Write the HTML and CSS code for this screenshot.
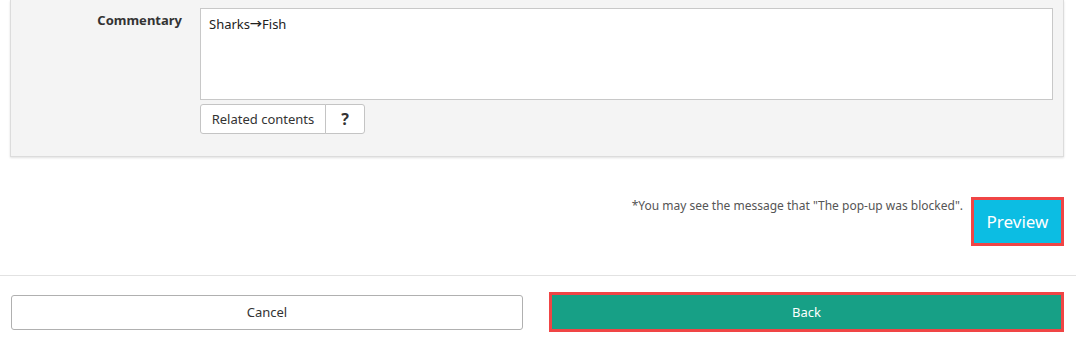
FILE: index.html
```html
<!DOCTYPE html>
<html lang="en">
<head>
  <meta charset="UTF-8" />
  <meta name="viewport" content="width=device-width, initial-scale=1.0"/>
  <title>Edit content</title>
  <link rel="stylesheet" href="styles.css">
</head>
<body>
  <div class="panel">
    <div class="form-row">
      <label class="form-label" for="commentary">Commentary</label>
      <div class="form-field">
        <div class="textarea" id="commentary">Sharks<span class="arrow">&#x2192;</span>Fish</div>
        <div class="btn-group">
          <button class="btn-related">Related contents</button>
          <button class="btn-help">?</button>
        </div>
      </div>
    </div>
  </div>

  <div class="preview-row">
    <p class="note">*You may see the message that "The pop-up was blocked".</p>
    <button class="btn-preview">Preview</button>
  </div>

  <div class="footer">
    <button class="btn-cancel">Cancel</button>
    <button class="btn-back">Back</button>
  </div>
</body>
</html>
```

FILE: styles.css
```css
body {
  font-family: 'Noto Sans', 'Liberation Sans', sans-serif;
  font-size: 13px;
  color: #333;
  margin: 0;
  padding: 0;
  background: #fff;
}
.panel {
  margin: 0 12px 0 10px;
  background-color: #f4f4f4;
  border: 1px solid #dcdcdc;
  border-top: none;
  box-shadow: 0 1px 2px rgba(0,0,0,0.12);
  padding: 8px 10px 22px 0;
}
.form-row {
  display: grid;
  grid-template-columns: 189px 1fr;
}
.form-label {
  text-align: right;
  padding-right: 18px;
  padding-top: 3px;
  font-weight: bold;
  color: #333;
}
.textarea {
  height: 78px;
  background: #fff;
  border: 1px solid #c8c8c8;
  padding: 6px 8px;
  color: #222;
}
.arrow {
  font-family: 'Noto Sans CJK JP', sans-serif;
  font-weight: bold;
  font-size: 12px;
}
.btn-group {
  display: flex;
  margin-top: 4px;
}
.btn-group button {
  height: 30px;
  background: #fff;
  border: 1px solid #c4c4c4;
  font-family: inherit;
  font-size: 13px;
  color: #333;
  cursor: pointer;
}
.btn-related {
  width: 126px;
  border-radius: 3px 0 0 3px;
}
.btn-help {
  width: 40px;
  margin-left: -1px;
  border-radius: 0 3px 3px 0;
  font-weight: bold;
  font-size: 16px !important;
}
.preview-row {
  display: flex;
  justify-content: flex-end;
  align-items: flex-start;
  padding: 40px 12px 29px 0;
}
.note {
  margin: 0 8px 0 0;
  font-size: 12px;
  color: #555;
}
.btn-preview {
  width: 93px;
  height: 49px;
  background: #0cbde3;
  border: 3px solid #f04545;
  color: #fff;
  font-family: inherit;
  font-size: 17px;
  cursor: pointer;
}
.footer {
  border-top: 1px solid #e2e2e2;
  display: flex;
  align-items: center;
  justify-content: space-between;
  padding: 16px 12px 15px 11px;
}
.btn-cancel {
  width: 512px;
  height: 35px;
  background: #fff;
  border: 1px solid #b0b0b0;
  border-radius: 3px;
  font-family: inherit;
  font-size: 13px;
  color: #333;
  cursor: pointer;
}
.btn-back {
  width: 515px;
  height: 40px;
  background: #17a086;
  border: 3px solid #f04545;
  color: #fff;
  font-family: inherit;
  font-size: 13px;
  cursor: pointer;
}
```
